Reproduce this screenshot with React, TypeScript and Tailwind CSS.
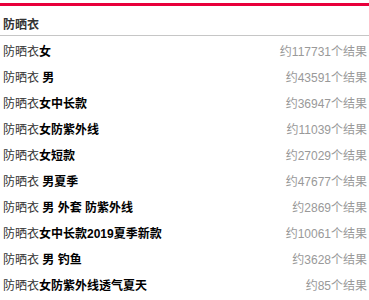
const rows: [string, string][] = [
  ["女", "约117731个结果"],
  [" 男", "约43591个结果"],
  ["女中长款", "约36947个结果"],
  ["女防紫外线", "约11039个结果"],
  ["女短款", "约27029个结果"],
  [" 男夏季", "约47677个结果"],
  [" 男 外套 防紫外线", "约2869个结果"],
  ["女中长款2019夏季新款", "约10061个结果"],
  [" 男 钓鱼", "约3628个结果"],
  ["女防紫外线透气夏天", "约85个结果"],
];

export default function App() {
  return (
    <div
      className="w-[369px] h-[300px] bg-white pt-[3px] overflow-hidden text-[12px]"
      style={{ fontFamily: '"Liberation Sans", "Noto Sans CJK SC", sans-serif' }}
    >
      <div className="h-[3px] bg-[#e8003b]" />
      <div className="h-[30px] flex items-center pt-[8px] px-[3px] font-bold text-[#333] border-b border-[#c6c6c6]">
        防晒衣
      </div>
      <ul>
        {rows.map(([suffix, count]) => (
          <li
            key={suffix}
            className="h-[26px] flex items-center justify-between pt-[6px] pl-[3px] pr-[2px]"
          >
            <span className="text-[#333] whitespace-pre">
              防晒衣<b className="font-bold text-[#000]">{suffix}</b>
            </span>
            <span className="text-[#999]">{count}</span>
          </li>
        ))}
      </ul>
    </div>
  );
}
